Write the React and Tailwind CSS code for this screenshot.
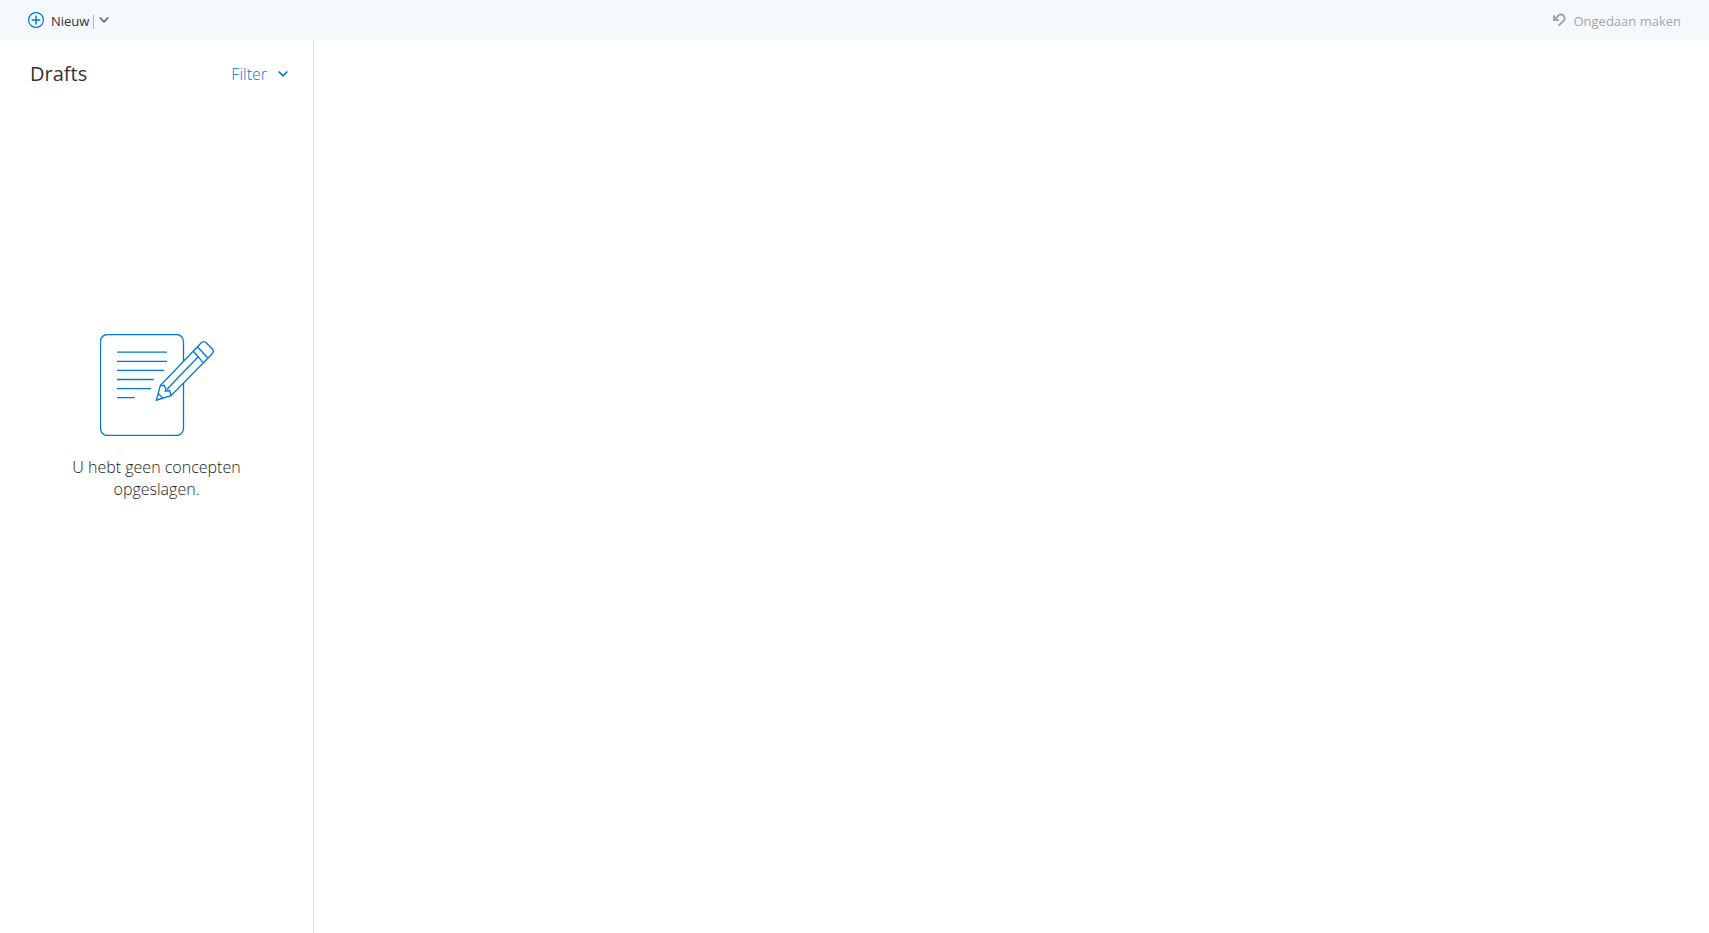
function PlusCircleIcon() {
  return (
    <svg width="16" height="16" viewBox="0 0 16 16" fill="none" stroke="#0078d7" aria-hidden="true">
      <circle cx="8" cy="8" r="7.4" strokeWidth="1.2" />
      <path d="M8 3.6v8.8M3.6 8h8.8" strokeWidth="1.4" />
    </svg>
  )
}

function ChevronIcon() {
  return (
    <svg width="10" height="8" viewBox="0 0 10 8" fill="none" stroke="currentColor" strokeWidth="1.7" aria-hidden="true">
      <path d="M0.7 1.5L5 5.9L9.3 1.5" />
    </svg>
  )
}

function UndoIcon() {
  return (
    <svg width="13" height="14" viewBox="0 0 13 14" fill="none" stroke="#a6a6a6" strokeWidth="2" aria-hidden="true">
      <path d="M1 2.2V6.9H5.8" />
      <path d="M1.4 6.5L4.8 3C6.4 1.4 8.6 1 10.2 2.3C12 3.8 12 6.2 10.5 7.9L5.6 12.8" />
    </svg>
  )
}

function DraftIllustration() {
  return (
    <svg width="114" height="102" viewBox="0 0 114 102" fill="none" stroke="#0078d7" strokeWidth="1.3" aria-hidden="true">
      {/* Paper */}
      <path d="M83.5 27.5V7.5a7 7 0 0 0-7-7h-69a7 7 0 0 0-7 7v87a7 7 0 0 0 7 7h69a7 7 0 0 0 7-7V49" />
      <path d="M17 18.2H67M17 27.3H67M17 36.4H64.3M17 45.5H53.7M17 54.6H51M17 63.7H34.7" />
      {/* Pencil */}
      <path d="M56.4 66.2L60.3 51.5L101 9Q103.7 6.3 106.4 9L112.3 15Q114.5 17.3 112 20L71 61.7Z" />
      <path d="M97.5 12.7L107.5 23.8M93.3 17.3L103.1 28.4M97.7 23.3L67 55.3" />
      <path d="M60.3 51.5H64.4L66 55.5L65.3 57.2L69.6 56.5L71 61.7M58.3 59.5L63.2 64.6" />
    </svg>
  )
}

export default function App() {
  return (
    <div className="flex min-h-screen flex-col bg-white font-['Open_Sans',sans-serif] text-[#333333]">
      {/* Toolbar */}
      <header className="flex h-10 items-center justify-between bg-[#f4f9fd] px-7 text-[13px] leading-5">
        <div className="flex items-center">
          <button type="button" className="flex items-center gap-[7px]">
            <PlusCircleIcon />
            <span className="pt-0.5">Nieuw</span>
          </button>
          <span className="mt-1 ml-1 h-[14px] w-px bg-[#b5b5b5]" />
          <button type="button" aria-label="Meer opties" className="ml-[5px] text-[#666666]">
            <ChevronIcon />
          </button>
        </div>
        <button type="button" disabled className="flex items-center gap-[7px] text-[#a6a6a6]">
          <UndoIcon />
          <span className="pt-0.5">Ongedaan maken</span>
        </button>
      </header>

      <div className="flex grow">
        {/* Message list */}
        <aside className="flex w-[314px] shrink-0 flex-col border-r border-[#e0e0e0]">
          <div className="flex items-center justify-between pt-5 pr-[25px] pl-[30px]">
            <h1 className="text-[20px] leading-7">Drafts</h1>
            <button type="button" className="flex items-center gap-[11px] text-[16px] leading-6 font-light text-[#0078d7]">
              Filter
              <ChevronIcon />
            </button>
          </div>

          <div className="mt-[246px] flex flex-col items-center">
            <DraftIllustration />
            <p className="mt-5 w-[200px] text-center text-[16px] leading-[22px] font-light text-[#222222]">
              U hebt geen concepten opgeslagen.
            </p>
          </div>
        </aside>

        <main className="grow" />
      </div>
    </div>
  )
}
